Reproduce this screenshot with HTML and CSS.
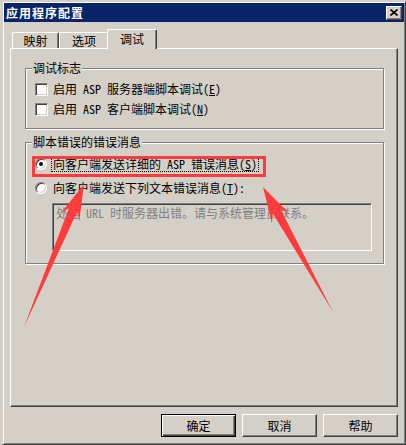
FILE: index.html
```html
<!DOCTYPE html>
<html lang="zh-CN">
<head>
    <meta charset="UTF-8">
    <title>应用程序配置</title>
    <link rel="stylesheet" href="styles.css">
</head>
<body>
    <div class="window">
        <div class="titlebar">
            <span class="title">应用程序配置</span>
            <span class="close">
                <svg width="8" height="7" viewBox="0 0 8 7"><path d="M0.5 0.5 L7.5 6.5 M7.5 0.5 L0.5 6.5" stroke="#000" stroke-width="1.6"/></svg>
            </span>
        </div>

        <div class="content">
            <!-- Tabs -->
            <div class="tabs">
                <div class="tab tab-map">映射</div>
                <div class="tab tab-options">选项</div>
                <div class="tab active">调试</div>
            </div>

            <div class="panel">
                <fieldset class="group group-flags">
                    <legend>调试标志</legend>
                    <div class="rows">
                        <label class="row"><span class="check"></span>启用 ASP 服务器端脚本调试(<u>E</u>)</label>
                        <label class="row"><span class="check"></span>启用 ASP 客户端脚本调试(<u>N</u>)</label>
                    </div>
                </fieldset>

                <fieldset class="group group-errors">
                    <legend>脚本错误的错误消息</legend>
                    <div class="rows">
                        <label class="row"><span class="radio checked"><span class="dot"></span></span><span class="focus">向客户端发送详细的 ASP 错误消息(<u>S</u>)</span></label>
                        <label class="row"><span class="radio"></span><span class="plain">向客户端发送下列文本错误消息(<u>T</u>):</span></label>
                        <div class="textbox">处理 URL 时服务器出错。请与系统管理员联系。</div>
                    </div>
                </fieldset>
            </div>

            <div class="buttons">
                <div class="btn default">确定</div>
                <div class="btn">取消</div>
                <div class="btn">帮助</div>
            </div>
        </div>
    </div>

    <!-- annotation overlay -->
    <div class="highlight"></div>
    <svg class="arrows" width="406" height="445" viewBox="0 0 406 445">
        <polygon fill="#ff3b3b" points="84,184 79.3,221.1 77.3,211.6 24,327 69,208.1 60.9,213.3"/>
        <polygon fill="#ff3b3b" points="263,187 289.3,213.5 280.6,209.2 333,312 272.8,213.6 271.9,223.3"/>
    </svg>
</body>
</html>
```

FILE: styles.css
```css
body {
    margin: 0;
    background: #d4d0c8;
    font-family: "Noto Sans Mono CJK SC", "Noto Sans CJK SC", sans-serif;
    font-size: 12px;
    color: #000;
}
.window {
    box-sizing: border-box;
    width: 404px;
    height: 444px;
    margin: 1px 0 0 2px;
    padding: 1px;
    border: 1px solid;
    border-color: #d4d0c8 #404040 #404040 #d4d0c8;
    box-shadow: inset 1px 1px 0 #fff, inset -1px -1px 0 #808080;
}
.titlebar {
    display: flex;
    align-items: center;
    justify-content: space-between;
    height: 19px;
    padding: 0 2px;
    background: #0a246a;
    color: #fff;
}
.title {
    font-weight: bold;
    letter-spacing: 1px;
    line-height: 19px;
}
.close {
    box-sizing: border-box;
    width: 16px;
    height: 14px;
    display: flex;
    align-items: center;
    justify-content: center;
    background: #d4d0c8;
    border: 1px solid;
    border-color: #fff #404040 #404040 #fff;
    box-shadow: inset -1px -1px 0 #808080;
}
.content {
    padding: 7px 6px 0 6px;
}

/* tabs */
.tabs {
    display: flex;
    align-items: flex-end;
    height: 19px;
    padding-left: 2px;
}
.tab {
    box-sizing: border-box;
    height: 16px;
    border: 1px solid;
    border-bottom: none;
    border-color: #fff #404040 #fff #fff;
    box-shadow: inset -1px 0 0 #808080;
    border-radius: 2px 2px 0 0;
    text-align: center;
    line-height: 15px;
}
.tab-map {
    width: 47px;
}
.tab-options {
    width: 50px;
}
.tab.active {
    position: relative;
    z-index: 1;
    width: 50px;
    height: 20px;
    margin: 0 -2px -1px -2px;
    padding-top: 1px;
    line-height: 16px;
    background: #d4d0c8;
}
.panel {
    box-sizing: border-box;
    height: 359px;
    padding: 12px 13px 0 14px;
    border: 1px solid;
    border-color: #fff #404040 #404040 #fff;
    box-shadow: inset -1px -1px 0 #808080;
}

/* group boxes */
.group {
    margin: 0;
    padding: 0 1px 0 0;
    min-width: 0;
    border: 1px solid #808080;
    box-shadow: inset 1px 1px 0 #fff, 1px 1px 0 #fff;
}
.group legend {
    margin-left: 6px;
    padding: 0 1px;
    line-height: 14px;
    background: #d4d0c8;
}
.group-flags .rows {
    padding: 5px 0 10px 9px;
}
.group-errors {
    margin-top: 6px;
}
.group-errors .rows {
    padding: 6px 0 12px 9px;
}
.rows {
    display: flex;
    flex-direction: column;
    gap: 2px;
}
.group-errors .rows {
    gap: 6px;
}
.row {
    display: flex;
    align-items: center;
    height: 18px;
    line-height: 14px;
}
.check {
    box-sizing: border-box;
    flex: none;
    width: 13px;
    height: 13px;
    margin-right: 5px;
    background: #fff;
    border: 1px solid;
    border-color: #808080 #fff #fff #808080;
    box-shadow: inset 1px 1px 0 #404040, inset -1px -1px 0 #d4d0c8;
}
.radio {
    box-sizing: border-box;
    flex: none;
    display: flex;
    align-items: center;
    justify-content: center;
    width: 12px;
    height: 12px;
    margin-right: 4px;
    border-radius: 50%;
    background: #fff;
    border: 1px solid;
    border-color: #808080 #fff #fff #808080;
    box-shadow: inset 1px 1px 0 #404040, inset -1px -1px 0 #d4d0c8;
}
.dot {
    width: 4px;
    height: 4px;
    border-radius: 50%;
    background: #000;
}
.focus {
    padding: 0 1px;
    border: 1px dotted #000;
}
.plain {
    padding-left: 2px;
}
.textbox {
    box-sizing: border-box;
    width: 320px;
    height: 48px;
    margin-left: 17px;
    padding: 2px 3px;
    line-height: 14px;
    color: #808080;
    border: 1px solid;
    border-color: #808080 #fff #fff #808080;
    box-shadow: inset 1px 1px 0 #404040, inset -1px -1px 0 #d4d0c8;
}

/* buttons */
.buttons {
    display: flex;
    justify-content: flex-end;
    gap: 6px;
    margin-top: 7px;
}
.btn {
    box-sizing: border-box;
    width: 75px;
    height: 23px;
    display: flex;
    align-items: center;
    justify-content: center;
    border: 1px solid;
    border-color: #fff #404040 #404040 #fff;
    box-shadow: inset -1px -1px 0 #808080;
}
.btn.default {
    border-color: #000;
    box-shadow: inset 1px 1px 0 #fff, inset -1px -1px 0 #404040, inset -2px -2px 0 #808080;
}

/* annotation */
.highlight {
    position: absolute;
    left: 32px;
    top: 156px;
    box-sizing: border-box;
    width: 234px;
    height: 21px;
    border: 3px solid #ff3b3b;
}
.arrows {
    position: absolute;
    left: 0;
    top: 0;
    pointer-events: none;
}
```
